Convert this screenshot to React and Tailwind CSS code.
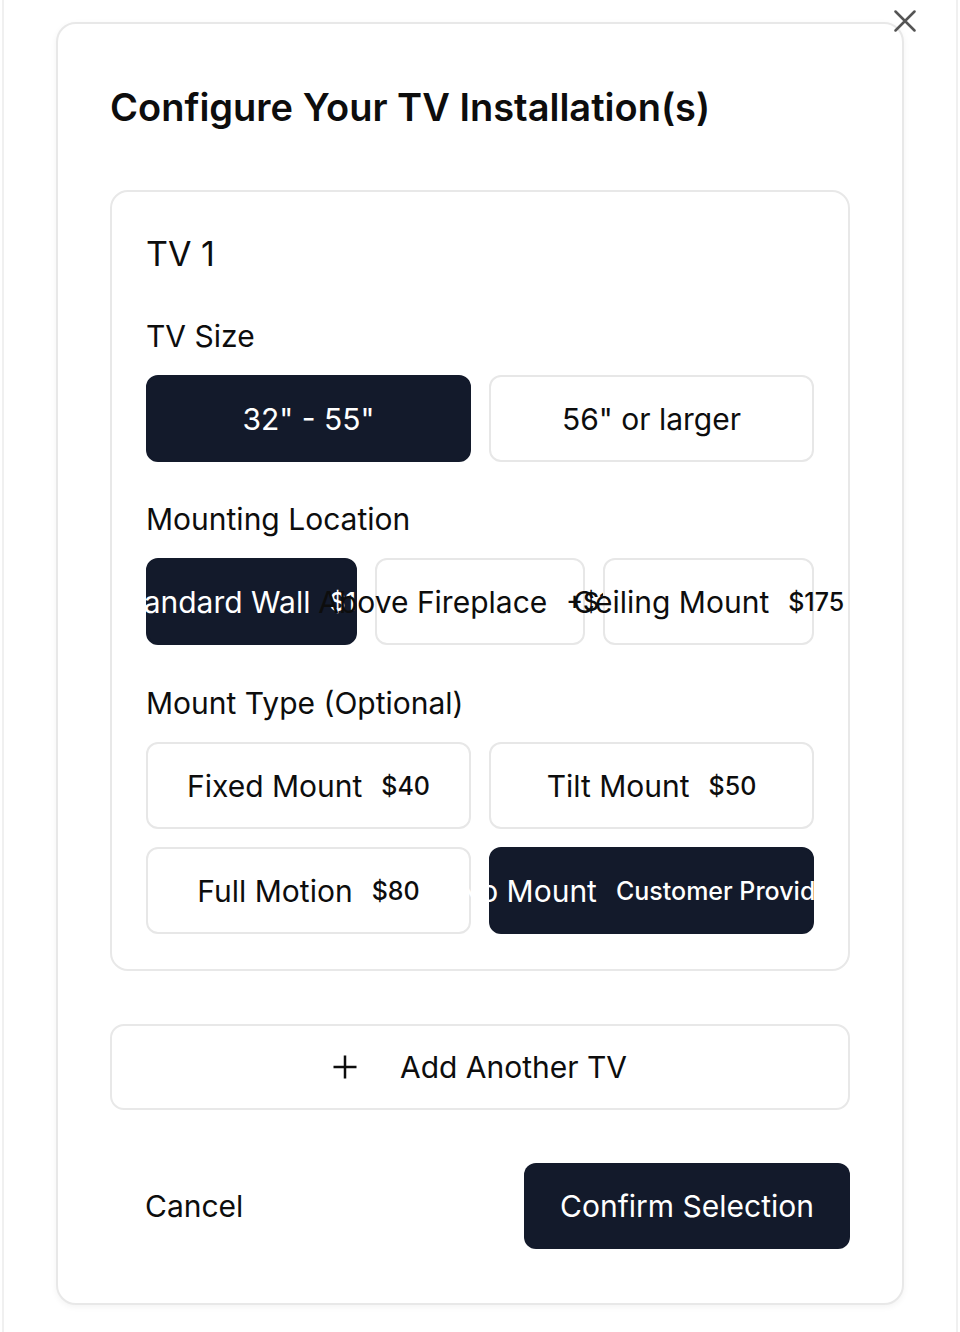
import { useState } from "react";

const sizes = [{ label: '32" - 55"' }, { label: '56" or larger' }];

const locations = [
  { label: "Standard Wall", price: "$100" },
  { label: "Above Fireplace", price: "+$100" },
  { label: "Ceiling Mount", price: "$175" },
];

const mounts = [
  { label: "Fixed Mount", price: "$40" },
  { label: "Tilt Mount", price: "$50" },
  { label: "Full Motion", price: "$80" },
  { label: "No Mount", price: "Customer Provided" },
];

function Option({ label, price, selected, onClick }) {
  return (
    <button
      onClick={onClick}
      className={`flex h-[87px] min-w-0 items-center justify-center overflow-visible rounded-[12px] border-2 ${
        selected
          ? "border-[#131a2b] bg-[#131a2b] text-white"
          : "border-[#e7e7e7] bg-white text-[#0d0d0d]"
      }`}
    >
      <span className="flex shrink-0 items-center gap-[19px] whitespace-nowrap">
        <span className="text-[30px] leading-[36px]">{label}</span>
        {price && <span className="text-[25px] font-medium leading-[30px]">{price}</span>}
      </span>
    </button>
  );
}

function Heading({ children, className = "" }) {
  return <h4 className={`text-[30px] leading-[36px] text-[#0d0d0d] ${className}`}>{children}</h4>;
}

export default function App() {
  const [size, setSize] = useState(0);
  const [location, setLocation] = useState(0);
  const [mount, setMount] = useState(3);

  return (
    <div className="min-h-[1332px] bg-white px-[2px] font-['Inter','Noto_Sans',sans-serif]">
      <div className="min-h-[1332px] border-x-2 border-[#f0f0f0] pt-[22px]">
        <div className="relative ml-[52px] w-[848px] rounded-[20px] border-2 border-[#e8e8e8] bg-white px-[52px] pt-[61px] pb-[54px] shadow-[0_2px_6px_rgba(0,0,0,0.05)]">
          <button className="absolute -top-[14px] -right-[14px] text-[#555]">
            <svg width="22" height="22" viewBox="0 0 22 22" fill="none" stroke="currentColor" strokeWidth="2.5" strokeLinecap="round">
              <path d="M1.5 1.5 20.5 20.5M20.5 1.5 1.5 20.5" />
            </svg>
          </button>

          <h2 className="text-[38px] font-semibold leading-[44px] text-[#0d0d0d]">
            Configure Your TV Installation(s)
          </h2>

          <div className="mt-[61px] rounded-[18px] border-2 border-[#e8e8e8] px-[34px] pt-[42px] pb-[35px]">
            <h3 className="text-[34px] leading-[40px] text-[#0d0d0d]">TV 1</h3>

            <Heading className="mt-[44px]">TV Size</Heading>
            <div className="mt-[21px] grid grid-cols-2 gap-[18px]">
              {sizes.map((s, i) => (
                <Option key={s.label} label={s.label} selected={size === i} onClick={() => setSize(i)} />
              ))}
            </div>

            <Heading className="mt-[39px]">Mounting Location</Heading>
            <div className="mt-[21px] grid grid-cols-3 gap-[18px]">
              {locations.map((l, i) => (
                <Option key={l.label} {...l} selected={location === i} onClick={() => setLocation(i)} />
              ))}
            </div>

            <Heading className="mt-[40px]">Mount Type (Optional)</Heading>
            <div className="mt-[21px] grid grid-cols-2 gap-x-[18px] gap-y-[18px]">
              {mounts.map((m, i) => (
                <Option key={m.label} {...m} selected={mount === i} onClick={() => setMount(i)} />
              ))}
            </div>
          </div>

          <button className="mt-[53px] flex h-[86px] w-full items-center justify-center gap-[43px] rounded-[14px] border-2 border-[#e8e8e8] bg-white text-[#0d0d0d]">
            <svg width="24" height="24" viewBox="0 0 24 24" fill="none" stroke="currentColor" strokeWidth="2.5">
              <path d="M12 0.5v23M0.5 12h23" />
            </svg>
            <span className="text-[30px] leading-[36px]">Add Another TV</span>
          </button>

          <div className="mt-[53px] flex items-center justify-between">
            <button className="flex h-[86px] items-center px-[35px] text-[30px] leading-[36px] text-[#0d0d0d]">
              Cancel
            </button>
            <button className="flex h-[86px] items-center rounded-[12px] bg-[#131a2b] px-[36px] text-[30px] leading-[36px] text-white">
              Confirm Selection
            </button>
          </div>
        </div>
      </div>
    </div>
  );
}
